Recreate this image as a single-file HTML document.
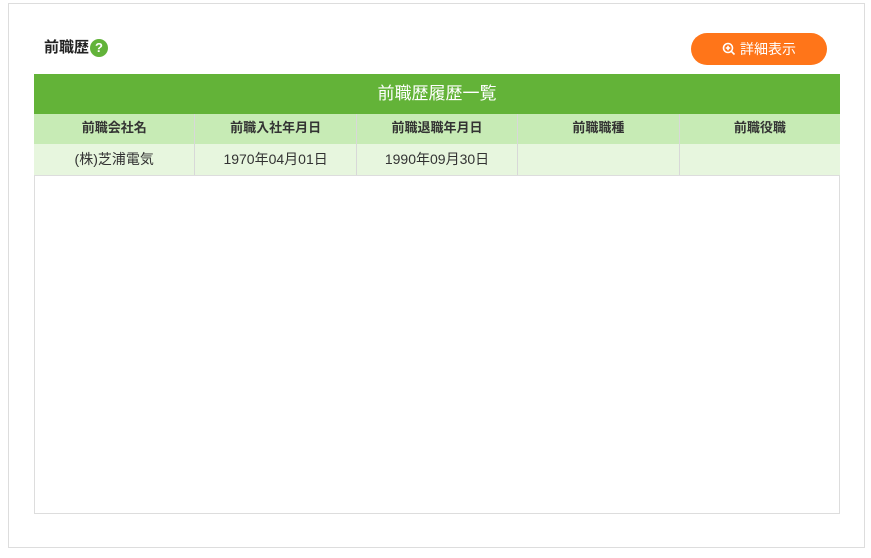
<!DOCTYPE html><html><head><meta charset="utf-8"><style>
body{margin:0;width:871px;height:558px;background:#fff;font-family:"Liberation Sans","Noto Sans CJK JP",sans-serif;position:relative;overflow:hidden}
.box{position:absolute;left:8px;top:3px;width:857px;height:545px;border:1px solid #ddd;box-sizing:border-box}
.title{position:absolute;left:44px;top:38px;font-size:15px;font-weight:bold;color:#222;line-height:20px}
.q{display:inline-block;width:18px;height:18px;border-radius:50%;background:#62b33a;color:#fff;font-size:13px;text-align:center;line-height:18px;vertical-align:top;margin-left:1px;margin-top:1px}
.btn{position:absolute;left:691px;top:33px;width:136px;height:32px;border-radius:16px;background:#ff7519;color:#fff;font-size:14px;line-height:32px;text-align:center}
.tbl{position:absolute;left:34px;top:74px;width:806px;height:440px;border:1px solid #ddd;border-top:none;box-sizing:border-box}
.cap{position:absolute;left:34px;top:74px;width:806px;height:40px;background:#63b338;color:#fff;font-size:17px;text-align:center;line-height:40px}
.row{position:absolute;left:34px;width:806px;display:flex}
.row div{flex:1;text-align:center;border-right:1px solid #d8d8d8;box-sizing:border-box;color:#333}
.row div:last-child{border-right:none}
.h{top:114px;height:30px;background:#c7ebb5;border-bottom:2px solid #d4d4d4}
.h div{font-weight:bold;line-height:28px;font-size:13px}
.d{top:144px;height:31px;background:#e7f6de;border-bottom:1px solid #ddd}
.d div{line-height:30px;font-size:14px}
</style></head><body>
<div class="box"></div>
<div class="title">前職歴<span class="q">?</span></div>
<div class="btn"><svg width="14" height="14" viewBox="0 0 14 14" style="vertical-align:-2px;margin-right:4px"><circle cx="6" cy="6" r="4.5" fill="none" stroke="#fff" stroke-width="1.6"/><path d="M9.3 9.3L12.5 12.5M6 3.8V8.2M3.8 6H8.2" stroke="#fff" stroke-width="1.6"/></svg>詳細表示</div>
<div class="tbl"></div>
<div class="cap">前職歴履歴一覧</div>
<div class="row h"><div>前職会社名</div><div>前職入社年月日</div><div>前職退職年月日</div><div>前職職種</div><div>前職役職</div></div>
<div class="row d"><div>(株)芝浦電気</div><div>1970年04月01日</div><div>1990年09月30日</div><div></div><div></div></div>
</body></html>
